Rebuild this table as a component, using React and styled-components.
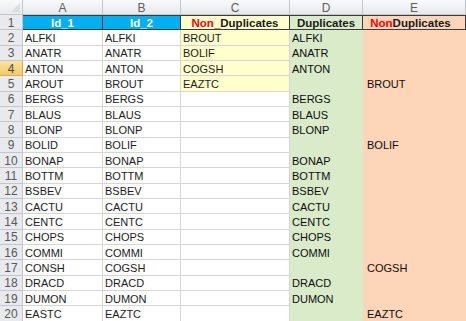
import React from 'react';
import styled, { createGlobalStyle } from 'styled-components';

const GlobalStyle = createGlobalStyle`
  html, body {
    margin: 0;
    padding: 0;
    background: #fff;
    overflow: hidden;
  }
  #root {
    width: 466px;
    height: 321px;
    overflow: hidden;
  }
`;

const GRID = '#d6d6d6';
const HEAD_LINE = '#c3c6cb';
const DARK = '#3c3c3c';

const FILLS = {
  blue: '#00b0f0',
  yellow: '#ffffcc',
  green: '#d9ebc9',
  peach: '#fdd5b8',
  white: '#ffffff',
};

const Sheet = styled.div`
  display: grid;
  grid-template-columns: 23px 80px 78px 109px 73px 103px;
  grid-template-rows: 15px repeat(20, 15.33px);
  width: 466px;
  font-family: Arial, 'Liberation Sans', sans-serif;
  font-size: 11px;
  color: #161616;
`;

const Corner = styled.div`
  position: relative;
  box-sizing: border-box;
  background: linear-gradient(#f8f9fa, #e8eaed);
  border-right: 1px solid ${HEAD_LINE};
  border-bottom: 1px solid ${HEAD_LINE};

  &::after {
    content: '';
    position: absolute;
    right: 2px;
    bottom: 2px;
    border-left: 9px solid transparent;
    border-bottom: 9px solid #dadde1;
  }
`;

const ColHeader = styled.div`
  display: flex;
  align-items: center;
  justify-content: center;
  box-sizing: border-box;
  background: linear-gradient(#f9fafb, #e6e9ed);
  border-right: 1px solid ${HEAD_LINE};
  border-bottom: 1px solid ${HEAD_LINE};
  font-family: 'Liberation Sans', Arial, sans-serif;
  font-size: 12px;
  color: #5e5e5e;
  padding-top: 1px;
`;

const RowHeader = styled.div`
  display: flex;
  align-items: center;
  justify-content: center;
  box-sizing: border-box;
  background: ${(p) =>
    p.$active ? 'linear-gradient(#fbe3a1, #f3c864)' : '#e8eaed'};
  border-right: 1px solid ${(p) => (p.$active ? '#e2ad48' : HEAD_LINE)};
  border-bottom: 1px solid ${(p) => (p.$active ? '#e2ad48' : HEAD_LINE)};
  font-family: 'Liberation Sans', Arial, sans-serif;
  font-size: 12px;
  color: ${(p) => (p.$active ? '#4a4a4a' : '#585858')};
  padding-top: 1px;
`;

const TitleCell = styled.div`
  display: flex;
  align-items: center;
  justify-content: center;
  box-sizing: border-box;
  background: ${(p) => FILLS[p.$fill]};
  border-top: 1px solid ${DARK};
  border-right: 1px solid ${DARK};
  border-bottom: 1px solid ${DARK};
  font-weight: bold;
  font-size: 11.5px;
  color: ${(p) => (p.$light ? '#ffffff' : '#1a1a1a')};
  padding-right: ${(p) => p.$padRight || 0}px;
  white-space: nowrap;
  overflow: hidden;
`;

const Red = styled.span`
  color: #ff0000;
`;

const Cell = styled.div`
  display: flex;
  align-items: center;
  box-sizing: border-box;
  padding: 1px 0 0 ${(p) => p.$indent || 2}px;
  background: ${(p) => FILLS[p.$fill || 'white']};
  border-right: 1px solid ${(p) => (p.$lines ? GRID : 'transparent')};
  border-bottom: 1px solid ${(p) => (p.$lines ? GRID : 'transparent')};
  color: ${(p) => (p.$lines ? '#1c1c1c' : '#0d0d0d')};
  white-space: nowrap;
  overflow: hidden;
`;

const rows = [
  ['ALFKI', 'ALFKI', 'BROUT', 'ALFKI', ''],
  ['ANATR', 'ANATR', 'BOLIF', 'ANATR', ''],
  ['ANTON', 'ANTON', 'COGSH', 'ANTON', ''],
  ['AROUT', 'BROUT', 'EAZTC', '', 'BROUT'],
  ['BERGS', 'BERGS', '', 'BERGS', ''],
  ['BLAUS', 'BLAUS', '', 'BLAUS', ''],
  ['BLONP', 'BLONP', '', 'BLONP', ''],
  ['BOLID', 'BOLIF', '', '', 'BOLIF'],
  ['BONAP', 'BONAP', '', 'BONAP', ''],
  ['BOTTM', 'BOTTM', '', 'BOTTM', ''],
  ['BSBEV', 'BSBEV', '', 'BSBEV', ''],
  ['CACTU', 'CACTU', '', 'CACTU', ''],
  ['CENTC', 'CENTC', '', 'CENTC', ''],
  ['CHOPS', 'CHOPS', '', 'CHOPS', ''],
  ['COMMI', 'COMMI', '', 'COMMI', ''],
  ['CONSH', 'COGSH', '', '', 'COGSH'],
  ['DRACD', 'DRACD', '', 'DRACD', ''],
  ['DUMON', 'DUMON', '', 'DUMON', ''],
  ['EASTC', 'EAZTC', '', '', 'EAZTC'],
];

const App = () => {
  return (
    <>
      <GlobalStyle />
      <Sheet>
        <Corner />
        {['A', 'B', 'C', 'D', 'E'].map((l) => (
          <ColHeader key={l}>{l}</ColHeader>
        ))}

        <RowHeader>1</RowHeader>
        <TitleCell $fill="blue" $light>Id_1</TitleCell>
        <TitleCell $fill="blue" $light>Id_2</TitleCell>
        <TitleCell $fill="yellow">
          <Red>Non</Red>_Duplicates
        </TitleCell>
        <TitleCell $fill="green">Duplicates</TitleCell>
        <TitleCell $fill="peach" $padRight={7}>
          <Red>Non</Red>Duplicates
        </TitleCell>

        {rows.map((r, i) => {
          const n = i + 2;
          return (
            <React.Fragment key={n}>
              <RowHeader $active={n === 4}>{n}</RowHeader>
              <Cell $lines>{r[0]}</Cell>
              <Cell $lines>{r[1]}</Cell>
              <Cell $lines $fill={r[2] ? 'yellow' : 'white'}>{r[2]}</Cell>
              <Cell $fill="green">{r[3]}</Cell>
              <Cell $fill="peach" $indent={4}>{r[4]}</Cell>
            </React.Fragment>
          );
        })}
      </Sheet>
    </>
  );
};

export default App;
